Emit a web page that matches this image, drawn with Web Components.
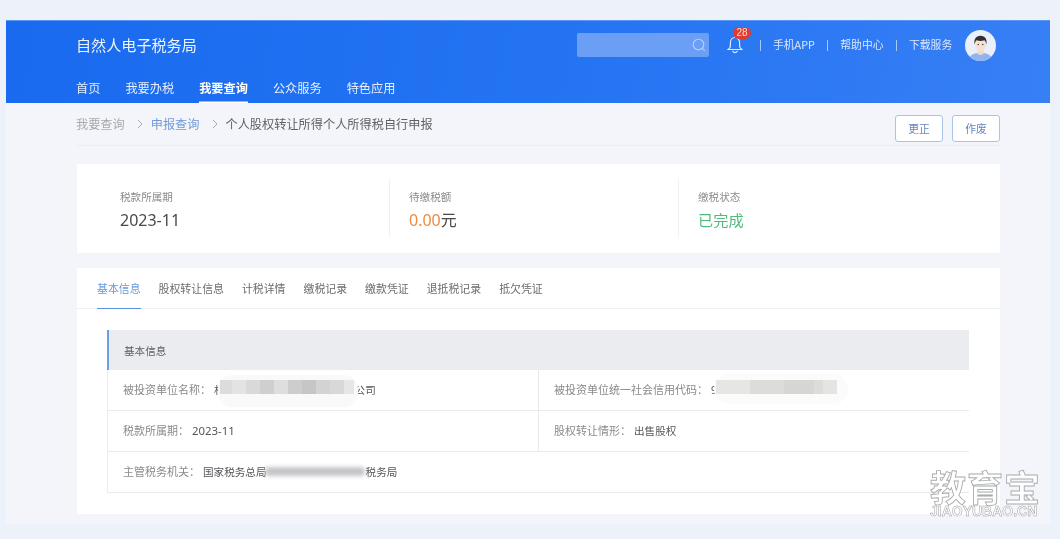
<!DOCTYPE html>
<html lang="zh"><head><meta charset="utf-8"><title>自然人电子税务局</title>
<style>
html,body{margin:0;padding:0;background:#edf2fa;height:539px;overflow:hidden}
body{font-family:"Noto Sans CJK SC","Noto Sans",sans-serif}
</style></head>
<body>
<app-shell>
  <tax-header></tax-header>
  <page-body>
    <crumb-bar></crumb-bar>
    <stat-strip></stat-strip>
    <detail-card></detail-card>
  </page-body>
</app-shell>
<brand-mark></brand-mark>
<script>
function def(name, css, html){
  customElements.define(name, class extends HTMLElement{
    constructor(){super();const s=this.attachShadow({mode:'open'});s.innerHTML='<style>'+css+'</style>'+html;}
  });
}
def('app-shell',`:host{display:block;margin:20px 10px 0 6px;height:504px;background:#f3f5fa;filter:blur(.55px)}`,`<slot></slot>`);
def('page-body',`:host{display:block;padding:0 50px 0 71px}`,`<slot></slot>`);

def('tax-header',`
:host{display:block;height:83px;padding-left:70px;box-sizing:border-box;color:#fff;background:linear-gradient(100deg,#196aef 0%,#2373f2 50%,#377ff5 100%);border-top:1px solid #5c95f4}
.top{display:flex;align-items:center;height:49px}
.title{font-size:15.1px;line-height:20px;color:#eef4ff;width:501px;flex:none;margin-bottom:4px}
.search{width:132px;height:24px;background:#6b9ff6;border-radius:2px;display:flex;align-items:center;justify-content:flex-end;padding-right:2px;box-sizing:border-box;flex:none;margin-bottom:1px}
.bell{position:relative;width:18px;height:22px;margin-left:17px;margin-bottom:2px;flex:none;display:block}
.badge{position:absolute;left:7px;top:-7px;width:18px;height:12px;border-radius:6px;background:#e23b2e;font:10px/12px "Liberation Sans",sans-serif;text-align:center;color:#fbd9d6}
.link{font-size:10.8px;line-height:16px;color:#dbe8ff;white-space:nowrap;margin-bottom:3px}
.sep{width:1px;height:11px;background:#a9c8fb;flex:none;margin-bottom:1px}
.avatar{width:31px;height:31px;margin-left:13px;flex:none;display:block}
nav{display:flex;gap:25px;height:33px}
nav a{font-size:12.2px;line-height:36px;height:33px;box-sizing:border-box;color:#e6efff;white-space:nowrap}
nav a.on{font-weight:700;color:#fff;box-shadow:inset 0 -1.5px 0 #fff}
`,`
<div class="top">
  <div class="title">自然人电子税务局</div>
  <div class="search"><svg width="16" height="16" viewBox="0 0 16 16" fill="none" stroke="#b5d0fb" stroke-width="1.1"><circle cx="7.5" cy="7.5" r="5.3"/><path d="M11.4 11.4l2.4 2.4"/></svg></div>
  <div class="bell"><svg width="18" height="22" viewBox="0 0 18 22" fill="none" stroke="#dce9ff" stroke-width="1.2" style="display:block"><path d="M9 3.5c-3 0-4.6 2.3-4.6 5.2v3.2c0 1.6-1 2.6-2.2 3.6h13.6c-1.2-1-2.2-2-2.2-3.6V8.7c0-2.9-1.6-5.2-4.6-5.2z"/><path d="M6.8 17.3c.5 1 1.2 1.4 2.2 1.4s1.7-.4 2.2-1.4" stroke-linecap="round"/></svg><span class="badge">28</span></div>
  <span class="sep" style="margin-left:16px"></span><span class="link" style="margin-left:12px">手机APP</span>
  <span class="sep" style="margin-left:12.5px"></span><span class="link" style="margin-left:12px">帮助中心</span>
  <span class="sep" style="margin-left:12.5px"></span><span class="link" style="margin-left:12px">下载服务</span>
  <svg class="avatar" viewBox="0 0 30 30"><defs><clipPath id="c"><circle cx="15" cy="15" r="15"/></clipPath></defs><g clip-path="url(#c)"><rect width="30" height="30" fill="#e9f0fa"/><path d="M3 30c1-6 6-8 12-8s11 2 12 8z" fill="#8fb4ef"/><path d="M12 19h6v4c-1 1.500-5 1.500-6 0z" fill="#f2d9cb"/><ellipse cx="15" cy="14" rx="5.300" ry="6.500" fill="#f6e0d3"/><path d="M9.300 14c-.8-5 1-8.500 5.700-8.500 4.800 0 6.500 3.500 5.700 8.500-.5-2-1-3.500-2-4-2 .8-5.500.8-7.400 0-1 .6-1.500 2-2 4z" fill="#33302f"/><circle cx="12.800" cy="14" r=".7" fill="#333"/><circle cx="17.200" cy="14" r=".7" fill="#333"/></g></svg>
</div>
<nav><a>首页</a><a>我要办税</a><a class="on">我要查询</a><a>公众服务</a><a>特色应用</a></nav>
`);

def('crumb-bar',`
:host{display:flex;justify-content:space-between;align-items:flex-start;height:43px;padding-top:12px;box-sizing:border-box;border-bottom:1px solid #eaecf1}
.c{display:flex;align-items:center;font-size:12.2px;line-height:18px;color:#a9a9ab;margin-left:-1px;white-space:nowrap}
.c svg{margin:0 7px 0 11px;flex:none}
.l{color:#6f9bd8}.t{color:#5f6063}
.b{display:flex;gap:9px}
.b span{display:block;width:48px;height:27px;box-sizing:border-box;border:1.5px solid #a8c4e8;border-radius:3px;background:#fff;font-size:10.8px;line-height:24px;text-align:center;color:#6487ba}
`,`
<div class="c"><span>我要查询</span><svg width="8" height="10" viewBox="0 0 8 10" fill="none" stroke="#aaa" stroke-width="1"><path d="M2 1l4 4-4 4"/></svg><span class="l">申报查询</span><svg width="8" height="10" viewBox="0 0 8 10" fill="none" stroke="#aaa" stroke-width="1"><path d="M2 1l4 4-4 4"/></svg><span class="t">个人股权转让所得个人所得税自行申报</span></div>
<div class="b"><span>更正</span><span>作废</span></div>
`);

def('stat-strip',`
:host{display:grid;grid-template-columns:312px 289px 1fr;height:89px;margin-top:18px;padding:15px 0 16px;box-sizing:border-box;background:#fff}
.s{padding-top:10px;padding-left:19px;box-sizing:border-box;border-left:1px solid #eef0f3}
.s:first-of-type{border:0;padding-left:43px}
.k{font-size:10.6px;line-height:16px;color:#8b8b8d}
.v{font-size:16px;line-height:22px;margin-top:4px;color:#4a4a4c;font-family:"Noto Sans","Noto Sans CJK SC",sans-serif}
.o{color:#f08a3e}.g{color:#4fbb7c;font-family:"Noto Sans CJK SC",sans-serif;font-size:15.2px;margin-top:3px}
`,`
<div class="s"><div class="k">税款所属期</div><div class="v">2023-11</div></div>
<div class="s"><div class="k">待缴税额</div><div class="v"><span class="o">0.00</span>元</div></div>
<div class="s"><div class="k">缴税状态</div><div class="v g">已完成</div></div>
`);

def('tab-bar',`
:host{display:flex;gap:18px;height:41px;padding-left:20px;box-sizing:border-box;border-bottom:1px solid #eff1f4}
a{font-size:10.9px;line-height:40px;height:41px;box-sizing:border-box;color:#6c6c6e;white-space:nowrap}
a.on{color:#6b98d8;border-bottom:1.5px solid #5b93dd}
`,`<a class="on">基本信息</a><a>股权转让信息</a><a>计税详情</a><a>缴税记录</a><a>缴款凭证</a><a>退抵税记录</a><a>抵欠凭证</a>`);

def('info-cell',`
:host{display:flex;align-items:center;height:41px;padding:0 0 2px 15px;box-sizing:border-box;font-size:11px;color:#8a8a8c;white-space:nowrap;position:relative;border-bottom:1px solid #e8eaee}
::slotted([slot=v]){color:#55565a;font-size:10.6px;margin-left:3px}
`,`<slot></slot><slot name="v"></slot>`);

def('blur-patch',`
:host{position:absolute;display:block;pointer-events:none}
svg{display:block;overflow:visible}
`,`<slot></slot>`);

def('info-table',`
:host{display:block;margin:21px 31px 0 30px}
.h{height:40px;background:#ebecf0;border-left:2px solid #6a9ee6;box-sizing:border-box;padding-left:15px;font-size:10.6px;line-height:42px;color:#5f6064}
.g{display:grid;grid-template-columns:430px 431px;border-left:1px solid #eaecef}
::slotted(info-cell:nth-child(2)),::slotted(info-cell:nth-child(4)){border-left:1px solid #e8eaee}
::slotted(.wide){grid-column:1/3}
`,`<div class="h">基本信息</div><div class="g"><slot></slot></div>`);

def('detail-card',`
:host{display:block;height:246px;margin-top:15px;background:#fff}
`,`
<tab-bar></tab-bar>
<info-table>
  <info-cell>被投资单位名称：<span slot="v">村<span style="margin-left:130px">公司</span></span>
    <blur-patch style="left:110px;top:5px"><svg width="143" height="33" viewBox="0 0 143 33"><defs><filter id="a"><feGaussianBlur stdDeviation=".6"/></filter></defs><rect width="140" height="32" rx="14" fill="#f9f9f9"/><g filter="url(#a)"><rect x="2" y="5" width="12" height="14" fill="#dcdcdc"/><rect x="14" y="5" width="14" height="14" fill="#e3e3e1"/><rect x="28" y="5" width="14" height="14" fill="#d9d9d9"/><rect x="42" y="5" width="14" height="14" fill="#cfcfcf"/><rect x="56" y="5" width="14" height="14" fill="#dedede"/><rect x="70" y="5" width="14" height="14" fill="#cdcdcd"/><rect x="84" y="5" width="14" height="14" fill="#c7c5c7"/><rect x="98" y="5" width="14" height="14" fill="#d3d3d3"/><rect x="112" y="5" width="14" height="14" fill="#d8d8d8"/><rect x="126" y="5" width="10" height="14" fill="#e6e6e6"/></g></svg></blur-patch>
  </info-cell>
  <info-cell>被投资单位统一社会信用代码：<span slot="v">9</span>
    <blur-patch style="left:175px;top:4px"><svg width="136" height="31" viewBox="0 0 136 31"><rect width="134" height="30" rx="15" fill="#fbfbfb"/><rect x="2" y="6" width="121" height="14" fill="#dcdcda"/><rect x="2" y="6" width="34" height="14" fill="#e6e6e4"/><rect x="70" y="6" width="30" height="14" fill="#d6d6d4"/><rect x="109" y="6" width="14" height="14" fill="#e4e4e2"/></svg></blur-patch>
  </info-cell>
  <info-cell>税款所属期：<span slot="v" style="font-family:'Noto Sans',sans-serif;font-size:11.4px">2023-11</span></info-cell>
  <info-cell>股权转让情形：<span slot="v">出售股权</span></info-cell>
  <info-cell class="wide">主管税务机关：<span slot="v">国家税务总局<span style="margin-left:99px">税务局</span></span>
    <blur-patch style="left:155px;top:10px"><svg width="104" height="18" viewBox="0 0 104 18"><defs><filter id="b" x="-10%" y="-40%" width="120%" height="180%"><feGaussianBlur stdDeviation="2"/></filter></defs><rect x="2" y="5" width="100" height="9" rx="4" fill="#c4c4c8" filter="url(#b)"/></svg></blur-patch>
  </info-cell>
</info-table>
`);

def('brand-mark',`
:host{position:absolute;left:930px;top:472px;width:112px;color:#fff;filter:blur(.35px)}
.a{font-family:"Liberation Sans","Noto Sans CJK SC",sans-serif;font-size:36px;letter-spacing:1px;line-height:36px;font-weight:700;white-space:nowrap;color:rgba(255,255,255,.9);-webkit-text-stroke:.9px #a9abad}
.b{font:700 14px/12px "Liberation Sans",sans-serif;white-space:nowrap;color:rgba(255,255,255,.9);-webkit-text-stroke:.5px #9a9c9e;margin-top:-3px}
`,`<div class="a">教育宝</div><div class="b">JIAOYUBAO.CN</div>`);
</script>
</body></html>
